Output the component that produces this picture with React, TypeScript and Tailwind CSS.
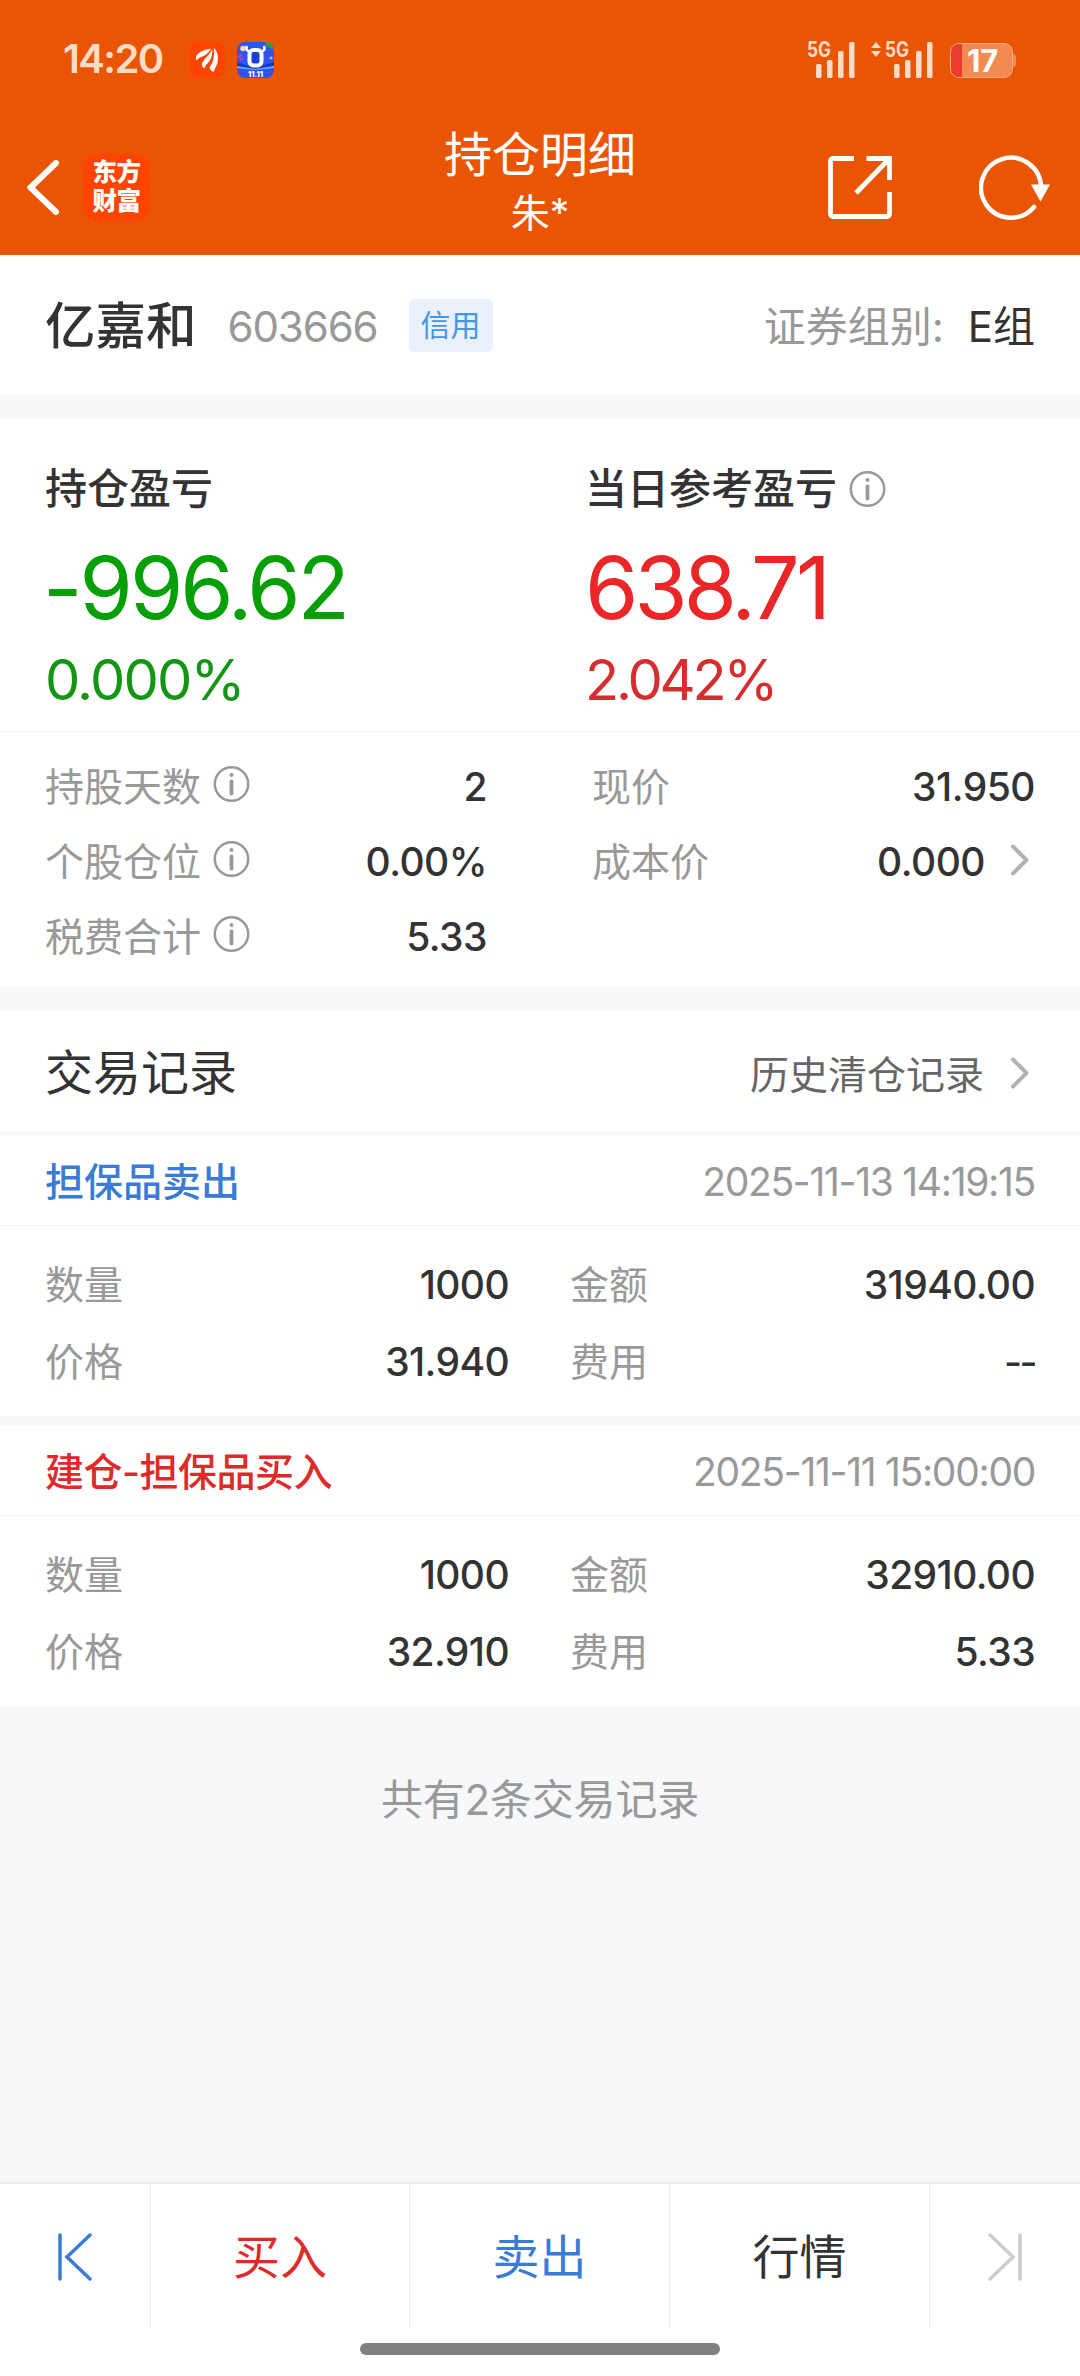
import type { ReactNode } from 'react';

interface Cell {
  label: string;
  value: string;
}

interface TradeRecord {
  id: string;
  title: string;
  titleClass: string;
  time: string;
  left: Cell[];
  right: Cell[];
}

const records: TradeRecord[] = [
  {
    id: 'sell',
    title: '担保品卖出',
    titleClass: 'text-[#3a7bd5]',
    time: '2025-11-13 14:19:15',
    left: [
      { label: '数量', value: '1000' },
      { label: '价格', value: '31.940' },
    ],
    right: [
      { label: '金额', value: '31940.00' },
      { label: '费用', value: '--' },
    ],
  },
  {
    id: 'buy',
    title: '建仓-担保品买入',
    titleClass: 'text-[#df2a2a] tracking-[-0.5px]',
    time: '2025-11-11 15:00:00',
    left: [
      { label: '数量', value: '1000' },
      { label: '价格', value: '32.910' },
    ],
    right: [
      { label: '金额', value: '32910.00' },
      { label: '费用', value: '5.33' },
    ],
  },
];

function SignalBars() {
  return (
    <svg width="39" height="36" viewBox="0 0 39 36" fill="#ffdcc8">
      <rect x="0" y="22" width="5.500" height="14" rx="1.500" />
      <rect x="11" y="18" width="5.500" height="18" rx="1.500" />
      <rect x="22" y="9" width="5.500" height="27" rx="1.500" />
      <rect x="33" y="0" width="5.500" height="36" rx="1.500" />
    </svg>
  );
}

function Signal({ arrows = false }: { arrows?: boolean }) {
  return (
    <div className="relative flex">
      <div className="ml-[9px]">
        <SignalBars />
      </div>
      <span className="absolute left-0 top-0 origin-left scale-x-[.82] text-[21px] leading-[15px] font-bold text-[#ffdcc8]">
        5G
      </span>
      {arrows && (
        <svg className="absolute top-0 -left-[14px]" width="10" height="15" viewBox="0 0 10 15" fill="#ffdcc8">
          <path d="M5 0l5 6H0z" />
          <path d="M5 15l5-6H0z" />
        </svg>
      )}
    </div>
  );
}

function StatusBar() {
  return (
    <div className="flex h-[120px] items-center pr-[64px] pl-[63px]">
      <span className="w-[126px] -mt-[2px] text-[40px] leading-none font-semibold tracking-[-1.6px] text-[#ffdcc8]">14:20</span>
      <svg width="36" height="36" viewBox="0 0 36 36">
        <rect width="36" height="36" rx="8" fill="#ff4400" />
        <g fill="#fff">
          <path d="M7.500 13.500C11 9 16 7.500 22 6.500c-2 4.500-6 7-10 8.500-2 1-3.500 2-4.500 3.500-.8-1.500-.8-3.500 0-5z" />
          <path d="M13 23.500c-.5-4.500 4-6.500 10.500-16.500 0 8-2.500 12-5.500 15-1.500 1.500-2 2.500-2.500 4-1.500-.3-2.300-1-2.500-2.500z" />
          <path d="M25 6c4 3.500 4.500 10 3.500 15-.8 3-2.500 5-4 9-2-.7-3.500-2.500-4-4.500 3.500-5 5-10 4.500-19.500z" />
        </g>
      </svg>
      <svg className="ml-3" width="37" height="36" viewBox="0 0 37 36">
        <clipPath id="app">
          <rect width="37" height="36" rx="8" />
        </clipPath>
        <g clipPath="url(#app)">
          <rect width="37" height="36" fill="#2f55e8" />
          <path d="M0 20l18 6 19-6v4l-19 4-18-4z" fill="#1638c8" />
          <path d="M0 24l18 3 19-3v2l-19 2-18-2z" fill="#5cb4ff" />
          <circle cx="6" cy="6.500" r="2.800" fill="#f1d6b0" />
          <path d="M28 0h9v7c-5 0-8-3-9-7z" fill="#27a53c" />
          <path d="M1 15l4-2M3 18l3-2" stroke="#c03be0" strokeWidth="2" />
          <circle cx="34" cy="16" r="1.500" fill="#a9b8ff" />
        </g>
        <path d="M10 4c-1 3-.5 5 3 5.500M27 4c1 3 .5 5-3 5.500" fill="none" stroke="#fff" strokeWidth="2.600" />
        <rect x="12.500" y="8" width="12" height="15.500" rx="4" fill="#1d3fd0" stroke="#fff" strokeWidth="4" />
        <text x="18.500" y="34.500" textAnchor="middle" fontSize="7.500" fontWeight="800" fill="#fff">
          11.11
        </text>
      </svg>
      <div className="ml-auto flex items-center">
        <Signal />
        <div className="ml-[30px]">
          <Signal arrows />
        </div>
        <div className="ml-[17px] flex h-[35px] w-[63px] items-center overflow-hidden rounded-[9px] border border-[#f7a888] bg-[#f28a52]">
          <div className="h-full w-[11px] bg-[#ec3b2e]" />
          <span className="ml-[5px] text-[31px] leading-none font-bold text-white">17</span>
        </div>
        <div className="h-[13px] w-[3px] rounded-r-[3px] bg-[#f28a52]" />
      </div>
    </div>
  );
}

function NavBar() {
  return (
    <div className="flex h-[135px] items-start px-[27px]">
      <div className="flex w-[230px] pt-[34px]">
        <svg className="mt-[5px]" width="33" height="57" viewBox="0 0 33 57" fill="none" stroke="#fff" strokeWidth="6" strokeLinecap="round">
          <path d="M29 4L3.500 28.500 29 53" strokeLinejoin="miter" />
        </svg>
        <div className="ml-[23px] h-[67px] w-[67px] rounded-[14px] bg-[#ff4400] pt-[4px] text-center text-[24.500px] leading-[29px] font-black tracking-[-0.5px] text-white">
          东方
          <br />
          财富
        </div>
      </div>
      <div className="flex-1 text-center text-white">
        <div className="pt-[8px] text-[48px] leading-[54px]">持仓明细</div>
        <div className="text-[39px] leading-[62px]">朱*</div>
      </div>
      <div className="flex w-[230px] justify-end pt-[35px]">
        <svg className="mt-px shrink-0" width="64" height="63" viewBox="0 0 64 63" fill="none" stroke="#fff" strokeWidth="4.800">
          <path d="M26 2.500H5a2.500 2.500 0 0 0-2.500 2.500v53A2.500 2.500 0 0 0 5 60.500h54a2.500 2.500 0 0 0 2.500-2.500V36" />
          <path d="M38.500 2.500h23V24M61 3L28 37" />
        </svg>
        <svg className="ml-[87px] shrink-0" width="74" height="65" viewBox="0 0 74 65">
          <path d="M55 52A30 30 0 1 1 62 32" fill="none" stroke="#fff" strokeWidth="4.500" strokeLinecap="round" />
          <path d="M52 29.500h19l-9.500 17z" fill="#fff" />
        </svg>
      </div>
    </div>
  );
}

function InfoIcon() {
  return (
    <svg width="37" height="36" viewBox="0 0 36 36" fill="none">
      <circle cx="18" cy="18" r="16.700" stroke="#999" strokeWidth="2.500" />
      <circle cx="18" cy="9" r="2" fill="#999" />
      <path d="M18 15.500v12" stroke="#999" strokeWidth="3.800" strokeLinecap="round" />
    </svg>
  );
}

function Chevron() {
  return (
    <svg width="20" height="32" viewBox="0 0 20 32" fill="none" stroke="#b2b2b2" strokeWidth="4" strokeLinecap="round" strokeLinejoin="round">
      <path d="M3 2.500L16.500 16 3 29.500" />
    </svg>
  );
}

function StatRow({ label, value, info, arrow }: { label: string; value: string; info?: boolean; arrow?: boolean }) {
  return (
    <div className="flex h-[75px] items-center">
      <span className="text-[39px] leading-none text-[#999]">{label}</span>
      {info && (
        <span className="-mt-[6px] ml-[12px]">
          <InfoIcon />
        </span>
      )}
      <span className="ml-auto text-[39px] leading-none font-medium tracking-[-0.5px] text-[#333]">{value}</span>
      {arrow && (
        <span className="-mt-[4px] mr-[5px] ml-[25px]">
          <Chevron />
        </span>
      )}
    </div>
  );
}

function RecordColumn({ cells, className }: { cells: Cell[]; className: string }) {
  return (
    <div className={className}>
      {cells.map((cell) => (
        <div key={cell.label} className="flex h-[77px] items-center justify-between">
          <span className="text-[39px] leading-none text-[#999]">{cell.label}</span>
          <span
            className={`text-[39px] leading-none font-medium text-[#333] ${
              cell.value === '--' ? 'tracking-[-2.5px]' : 'tracking-[-0.6px]'
            }`}
          >
            {cell.value}
          </span>
        </div>
      ))}
    </div>
  );
}

function RecordCard({ record }: { record: TradeRecord }) {
  return (
    <div className="h-[281px] bg-white">
      <div className="flex h-[91px] items-center justify-between border-b border-[#f4f5f7] px-[45px] pt-[2px]">
        <span className={`text-[39px] leading-none font-medium ${record.titleClass}`}>{record.title}</span>
        <span className="text-[39px] leading-none tracking-[-1.3px] text-[#999]">{record.time}</span>
      </div>
      <div className="flex px-[45px] pt-[20px]">
        <RecordColumn cells={record.left} className="w-[464px]" />
        <RecordColumn cells={record.right} className="ml-[61px] flex-1" />
      </div>
    </div>
  );
}

function BottomTab({ children, className }: { children: ReactNode; className: string }) {
  return (
    <button className={`flex h-[144px] items-center justify-center border-[#ececec] pt-[2px] text-[47px] ${className}`}>
      {children}
    </button>
  );
}

export default function App() {
  return (
    <div className="flex h-[2376px] w-[1080px] flex-col bg-[#f6f8fa] font-[Inter,'Noto_Sans_CJK_SC',sans-serif]">
      <header className="h-[255px] bg-[#ea5504]">
        <StatusBar />
        <NavBar />
      </header>

      <section className="flex h-[140px] items-center bg-white px-[45px] pt-[3px]">
        <h1 className="text-[50.500px] leading-none font-medium text-[#333]">亿嘉和</h1>
        <span className="ml-[31px] text-[42px] leading-none tracking-[-1.1px] text-[#999]">603666</span>
        <span className="-mt-[3px] ml-[31px] flex h-[53px] w-[84px] items-center justify-center rounded-[6px] bg-[#e8f1fc] text-[30px] text-[#4a94e6]">
          信用
        </span>
        <span className="ml-auto text-[42px] leading-none text-[#999]">证券组别:</span>
        <span className="ml-[24px] text-[42px] leading-none text-[#333]">E组</span>
      </section>

      <section className="mt-6 h-[313px] border-b border-[#f4f5f7] bg-white">
        <div className="flex px-[45px] pt-[40px]">
          <div className="w-[540px]">
            <div className="text-[42px] leading-[60px] font-medium text-[#333]">持仓盈亏</div>
            <div className="mt-[19px] -ml-[2px] text-[86px] leading-[100px] tracking-[-3px] text-[#069f06]">-996.62</div>
            <div className="text-[56px] leading-[84px] tracking-[-1.8px] text-[#139613]">0.000%</div>
          </div>
          <div>
            <div className="flex items-center text-[42px] leading-[60px] font-medium text-[#333]">
              当日参考盈亏
              <span className="ml-[12px]">
                <InfoIcon />
              </span>
            </div>
            <div className="mt-[19px] text-[86px] leading-[100px] tracking-[-3.8px] text-[#ea2626]">638.71</div>
            <div className="text-[56px] leading-[84px] tracking-[-3.2px] text-[#d62e2e]">2.042%</div>
          </div>
        </div>
      </section>

      <section className="flex h-[255px] bg-white px-[45px] pt-[17px]">
        <div className="w-[442px]">
          <StatRow label="持股天数" value="2" info />
          <StatRow label="个股仓位" value="0.00%" info />
          <StatRow label="税费合计" value="5.33" info />
        </div>
        <div className="ml-[105px] flex-1">
          <StatRow label="现价" value="31.950" />
          <StatRow label="成本价" value="0.000" arrow />
        </div>
      </section>

      <section className="mt-6 flex h-[120px] items-center bg-white px-[45px] pt-[3px]">
        <h2 className="text-[48px] leading-none text-[#333]">交易记录</h2>
        <span className="mt-[4px] ml-auto text-[39px] leading-none text-[#666]">历史清仓记录</span>
        <span className="mr-[5px] ml-[26px]">
          <Chevron />
        </span>
      </section>

      <div className="mt-1 flex flex-col gap-[9px]">
        {records.map((record) => (
          <RecordCard key={record.id} record={record} />
        ))}
      </div>

      <p className="mt-[64px] text-center text-[42px] leading-[60px] tracking-[-0.2px] text-[#999]">共有2条交易记录</p>

      <footer className="mt-auto h-[194px] border-t-2 border-[#ececec] bg-white">
        <div className="flex">
          <BottomTab className="w-[151px] border-r">
            <svg width="34" height="48" viewBox="0 0 34 48" fill="none" stroke="#3a7bd5" strokeWidth="3.500" strokeLinecap="round">
              <path d="M2 2v44M32 2L9 24l23 22" />
            </svg>
          </BottomTab>
          <BottomTab className="w-[259px] border-r text-[#df2a2a]">买入</BottomTab>
          <BottomTab className="w-[260px] border-r text-[#3a7bd5]">卖出</BottomTab>
          <BottomTab className="w-[260px] border-r text-[#333]">行情</BottomTab>
          <BottomTab className="w-[150px]">
            <svg width="34" height="48" viewBox="0 0 34 48" fill="none" stroke="#ccc" strokeWidth="3.500" strokeLinecap="round">
              <path d="M32 2v44M2 2l23 22L2 46" />
            </svg>
          </BottomTab>
        </div>
        <div className="mx-auto mt-[15px] h-[12px] w-[360px] rounded-full bg-[#808080]" />
      </footer>
    </div>
  );
}
